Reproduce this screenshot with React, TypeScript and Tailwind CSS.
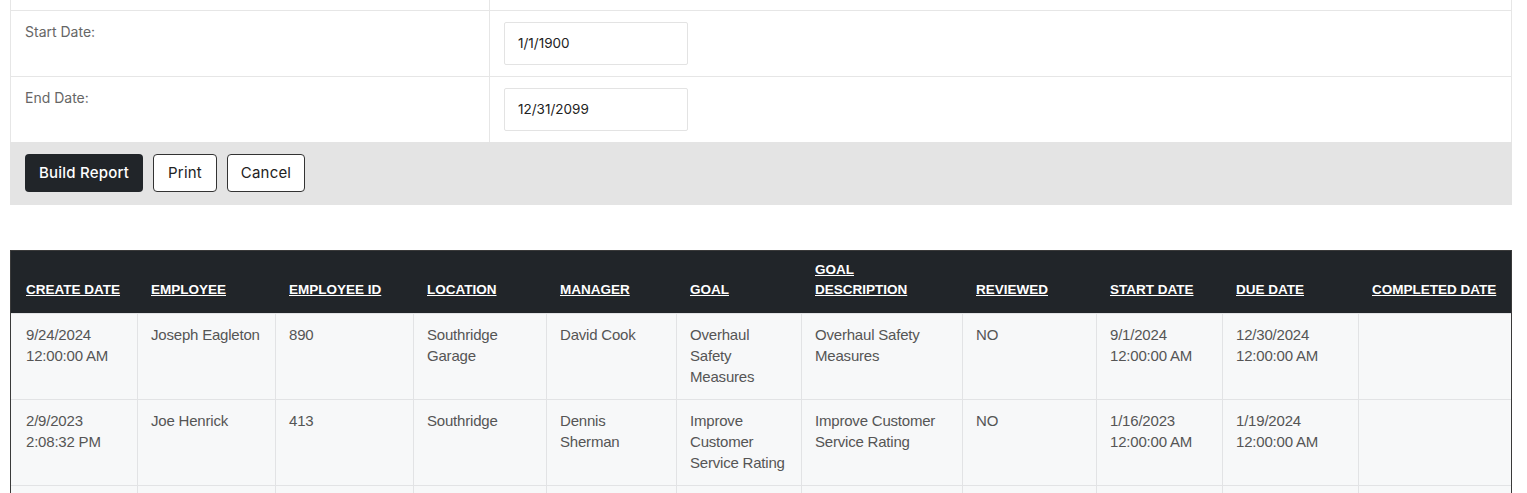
import React from 'react'

type Row = string[]

const columns: { label: React.ReactNode; key: string; w: string }[] = [
  { key: 'cd', label: 'CREATE DATE', w: 'w-[126px]' },
  { key: 'emp', label: 'EMPLOYEE', w: 'w-[138px]' },
  { key: 'eid', label: 'EMPLOYEE ID', w: 'w-[138px]' },
  { key: 'loc', label: 'LOCATION', w: 'w-[133px]' },
  { key: 'mgr', label: 'MANAGER', w: 'w-[130px]' },
  { key: 'goal', label: 'GOAL', w: 'w-[125px]' },
  {
    key: 'gd',
    label: (
      <>
        GOAL
        <br />
        DESCRIPTION
      </>
    ),
    w: 'w-[161px]',
  },
  { key: 'rev', label: 'REVIEWED', w: 'w-[134px]' },
  { key: 'sd', label: 'START DATE', w: 'w-[126px]' },
  { key: 'dd', label: 'DUE DATE', w: 'w-[136px]' },
  { key: 'comp', label: 'COMPLETED DATE', w: 'w-[153px]' },
]

const rows: Row[] = [
  [
    '9/24/2024 12:00:00 AM',
    'Joseph Eagleton',
    '890',
    'Southridge Garage',
    'David Cook',
    'Overhaul Safety Measures',
    'Overhaul Safety Measures',
    'NO',
    '9/1/2024 12:00:00 AM',
    '12/30/2024 12:00:00 AM',
    '',
  ],
  [
    '2/9/2023 2:08:32 PM',
    'Joe Henrick',
    '413',
    'Southridge',
    'Dennis Sherman',
    'Improve Customer Service Rating',
    'Improve Customer Service Rating',
    'NO',
    '1/16/2023 12:00:00 AM',
    '1/19/2024 12:00:00 AM',
    '',
  ],
  ['', '', '', '', '', '', '', '', '', '', ''],
]

function FormRow({ label, value, last }: { label: string; value: string; last?: boolean }) {
  return (
    <div className={last ? 'flex h-[65px]' : 'flex border-b border-[#e6e6e6] h-[66px]'}>
      <div className="w-[479px] border-r border-[#e6e6e6] pl-[14px] pt-[12px] text-[14px] text-[#666] leading-[18px]">
        {label}
      </div>
      <div className="flex-1 pl-[14px] pt-[11px]">
        <div className="w-[184px] h-[43px] border border-[#e3e3e3] rounded-[2px] flex items-center pl-[13px] text-[13.5px] text-[#222]">
          {value}
        </div>
      </div>
    </div>
  )
}

export default function App() {
  return (
    <div className="bg-white w-[1527px] h-[493px] overflow-hidden pl-[10px] pr-[15px]">
      <div className="font-['Inter','Noto_Sans',sans-serif] border-x border-[#e6e6e6]">
        <div className="flex border-b border-[#e6e6e6] h-[11px]">
          <div className="w-[479px] border-r border-[#e6e6e6]" />
          <div className="flex-1" />
        </div>
        <FormRow label="Start Date:" value="1/1/1900" />
        <FormRow label="End Date:" value="12/31/2099" last />
      </div>
      <div className="font-['Inter','Noto_Sans',sans-serif] bg-[#e4e4e4] h-[63px] flex items-start gap-[10px] pl-[15px] pt-[12px]">
        <button className="w-[118px] h-[38px] rounded-[4px] bg-[#212529] text-white text-[15px] font-medium tracking-[0.2px]">
          Build Report
        </button>
        <button className="w-[64px] h-[38px] rounded-[4px] bg-white border border-[#333] text-[#222] text-[15px] tracking-[0.2px]">
          Print
        </button>
        <button className="w-[78px] h-[38px] rounded-[4px] bg-white border border-[#333] text-[#222] text-[15px] tracking-[0.2px]">
          Cancel
        </button>
      </div>

      <div className="mt-[45px] border border-[#3a3a3a] font-['Liberation_Sans',Arial,sans-serif]">
        <table className="table-fixed border-separate border-spacing-0 w-full">
          <thead>
            <tr className="bg-[#212529] h-[62px]">
              {columns.map((c) => (
                <th
                  key={c.key}
                  className={`${c.w} align-bottom text-left pl-[14px] first:pl-[15px] pr-[8px] pb-[13px] text-[13.5px] leading-[20px] font-bold text-white underline`}
                >
                  {c.label}
                </th>
              ))}
            </tr>
          </thead>
          <tbody>
            {rows.map((r, i) => (
              <tr key={i} className="bg-[#f7f8f9] h-[86px]">
                {r.map((v, j) => (
                  <td
                    key={j}
                    className="align-top border-t border-l first:border-l-0 first:pl-[15px] border-[#e2e3e5] pl-[13px] pr-[10px] pt-[10px] text-[15px] leading-[21px] tracking-[-0.2px] text-[#555]"
                  >
                    {v}
                  </td>
                ))}
              </tr>
            ))}
          </tbody>
        </table>
      </div>
    </div>
  )
}
